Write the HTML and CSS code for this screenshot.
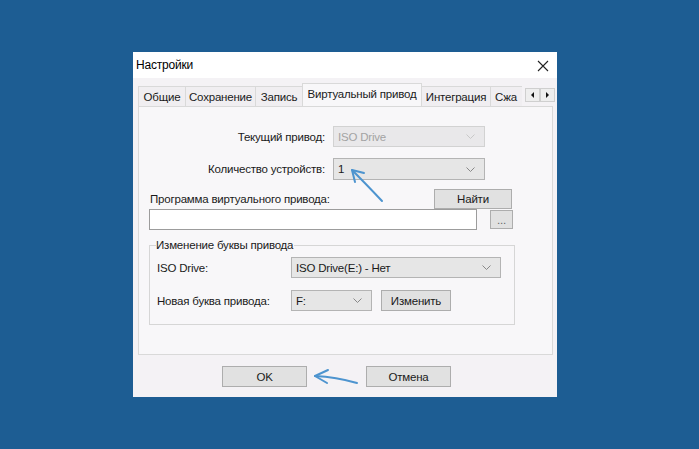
FILE: index.html
```html
<!DOCTYPE html>
<html lang="ru">
<head>
  <meta charset="UTF-8" />
  <title>Настройки</title>
  <link rel="stylesheet" href="styles.css">
</head>
<body>

  <div class="dialog">
    <div class="titlebar">
      <span class="title">Настройки</span>
      <svg class="close" width="12" height="12" viewBox="0 0 12 12">
        <path d="M1 1 L11 11 M11 1 L1 11" stroke="#222" stroke-width="1.1" fill="none"/>
      </svg>
    </div>

    <div class="tabbar">
      <div class="tabs">
        <div class="tab" style="width:48px">Общие</div>
        <div class="tab" style="width:71px">Сохранение</div>
        <div class="tab" style="width:48px">Запись</div>
        <div class="tab active" style="width:120px">Виртуальный привод</div>
        <div class="tab" style="width:70px">Интеграция</div>
        <div class="tab last" style="width:32px">Сжа</div>
      </div>
      <div class="tab-scroll">
        <span class="scroll-btn">
          <svg width="5" height="6" viewBox="0 0 5 6"><polygon points="4,0 4,6 1,3" fill="#111"/></svg>
        </span>
        <span class="scroll-btn">
          <svg width="5" height="6" viewBox="0 0 5 6"><polygon points="1,0 1,6 4,3" fill="#111"/></svg>
        </span>
      </div>
    </div>

    <div class="panel">
      <div class="row first">
        <label class="label-right">Текущий привод:</label>
        <div class="combo disabled wide">
          <span>ISO Drive</span>
          <svg class="chev" width="9" height="5" viewBox="0 0 9 5"><path d="M0.5 0.5 L4.5 4.5 L8.5 0.5" stroke="#c8c8c8" fill="none"/></svg>
        </div>
      </div>

      <div class="row second">
        <label class="label-right">Количество устройств:</label>
        <div class="combo wide tall">
          <span>1</span>
          <svg class="chev" width="9" height="5" viewBox="0 0 9 5"><path d="M0.5 0.5 L4.5 4.5 L8.5 0.5" stroke="#888" fill="none"/></svg>
        </div>
      </div>

      <div class="row program">
        <label>Программа виртуального привода:</label>
        <button class="btn find">Найти</button>
      </div>

      <div class="row path">
        <div class="textbox"></div>
        <button class="btn dots">...</button>
      </div>

      <fieldset class="group">
        <legend>Изменение буквы привода</legend>
        <div class="grow">
          <label class="glabel">ISO Drive:</label>
          <div class="combo drive">
            <span>ISO Drive(E:) - Нет</span>
            <svg class="chev" width="9" height="5" viewBox="0 0 9 5"><path d="M0.5 0.5 L4.5 4.5 L8.5 0.5" stroke="#888" fill="none"/></svg>
          </div>
        </div>
        <div class="grow second-g">
          <label class="glabel">Новая буква привода:</label>
          <div class="combo letter">
            <span>F:</span>
            <svg class="chev" width="9" height="5" viewBox="0 0 9 5"><path d="M0.5 0.5 L4.5 4.5 L8.5 0.5" stroke="#888" fill="none"/></svg>
          </div>
          <button class="btn change">Изменить</button>
        </div>
      </fieldset>
    </div>

    <div class="actions">
      <button class="btn action">OK</button>
      <button class="btn action">Отмена</button>
    </div>
  </div>

  <!-- callout arrows drawn over the screenshot -->
  <svg class="callouts" width="699" height="449" viewBox="0 0 699 449">
    <g stroke="#4d94cf" stroke-width="2" fill="none" stroke-linecap="round" stroke-linejoin="round">
      <path d="M382 201 Q366 184 352 170"/>
      <path d="M352 170 L364 173 M352 170 L355 182"/>
      <path d="M357 383 Q336 377 315 376"/>
      <path d="M315 376 L328 370 M315 376 L327 383"/>
    </g>
  </svg>

</body>
</html>
```

FILE: styles.css
```css
body {
  margin: 0;
  width: 699px;
  height: 449px;
  background: #1d5d93;
  font-family: 'Liberation Sans', Arial, sans-serif;
  font-size: 11.5px;
  letter-spacing: -0.2px;
  color: #1a1a1a;
  overflow: hidden;
}

.dialog {
  margin: 52px 0 0 133px;
  width: 424px;
  height: 345px;
  background: #f4f2f5;
  display: flex;
  flex-direction: column;
}

.titlebar {
  height: 26px;
  background: #fff;
  display: flex;
  align-items: center;
  padding: 0 8px 0 3px;
}

.title {
  flex: 1;
  font-size: 12px;
  color: #000;
}

.close {
  margin-top: 1px;
}

/* tab strip */
.tabbar {
  height: 28px;
  display: flex;
  padding-left: 5px;
}

.tabs {
  width: 387px;
  display: flex;
  align-items: flex-end;
}

.tab {
  flex: none;
  height: 20px;
  box-sizing: border-box;
  border: 1px solid #d9d9d9;
  border-bottom: none;
  margin-right: -1px;
  background: #f0eef1;
  display: flex;
  align-items: center;
  justify-content: center;
  white-space: nowrap;
}

.tab.last {
  justify-content: flex-start;
  padding-left: 4px;
  border-right: none;
}

.tab.active {
  height: 23px;
  background: #f8f7f9;
  position: relative;
  z-index: 1;
  padding-bottom: 3px;
}

.tab-scroll {
  display: flex;
  margin-top: 10px;
}

.scroll-btn {
  width: 15px;
  height: 14px;
  box-sizing: border-box;
  border: 1px solid #cfcfcf;
  background: #eeeeee;
  display: flex;
  align-items: center;
  justify-content: center;
}

/* page */
.panel {
  margin-left: 5px;
  width: 415px;
  height: 249px;
  box-sizing: border-box;
  border: 1px solid #d9d9d9;
  background: #f8f7f9;
}

.row {
  display: flex;
  align-items: center;
}

.row.first {
  margin-top: 19px;
}

.row.second {
  margin-top: 11px;
}

.label-right {
  width: 186px;
  text-align: right;
  margin-right: 8px;
}

.combo {
  box-sizing: border-box;
  height: 21px;
  border: 1px solid #b4b4b4;
  background: #e6e6e6;
  display: flex;
  align-items: center;
  padding: 0 9px 0 4px;
}

.combo span {
  flex: 1;
  white-space: nowrap;
}

.combo.disabled {
  border-color: #d2d2d2;
  background: #e9e8ea;
  color: #a3a3a3;
}

.combo.wide {
  width: 152px;
}

.combo.tall {
  height: 22px;
}

.btn {
  font-family: inherit;
  font-size: 11.5px;
  letter-spacing: -0.2px;
  color: #1a1a1a;
  box-sizing: border-box;
  border: 1px solid #adadad;
  background: #e1e1e1;
  padding: 0;
}

.row.program {
  margin-top: 9px;
  padding-left: 11px;
}

.find {
  margin-left: auto;
  margin-right: 40px;
  width: 78px;
  height: 20px;
}

.row.path {
  padding-left: 10px;
}

.textbox {
  width: 328px;
  height: 21px;
  box-sizing: border-box;
  border: 1px solid #9c9c9c;
  background: #fff;
}

.dots {
  margin-left: 13px;
  width: 23px;
  height: 19px;
  color: #666;
  line-height: 12px;
}

/* group box */
.group {
  margin: 7px 0 0 10px;
  padding: 0 7px 13px 7px;
  width: 366px;
  box-sizing: border-box;
  border: 1px solid #d6d6d6;
  min-inline-size: 0;
}

.group legend {
  padding: 0 1px 0 0;
  margin-left: -1px;
  line-height: 16px;
}

.grow {
  display: flex;
  align-items: center;
  margin-top: 4px;
}

.grow.second-g {
  margin-top: 12px;
}

.glabel {
  width: 134px;
}

.combo.drive {
  width: 210px;
}

.combo.letter {
  width: 81px;
}

.change {
  margin-left: 9px;
  width: 70px;
  height: 21px;
}

/* dialog buttons */
.actions {
  display: flex;
  gap: 59px;
  margin-top: 11px;
  padding-left: 89px;
}

.action {
  width: 85px;
  height: 21px;
}

.callouts {
  position: absolute;
  left: 0;
  top: 0;
  pointer-events: none;
}
```
